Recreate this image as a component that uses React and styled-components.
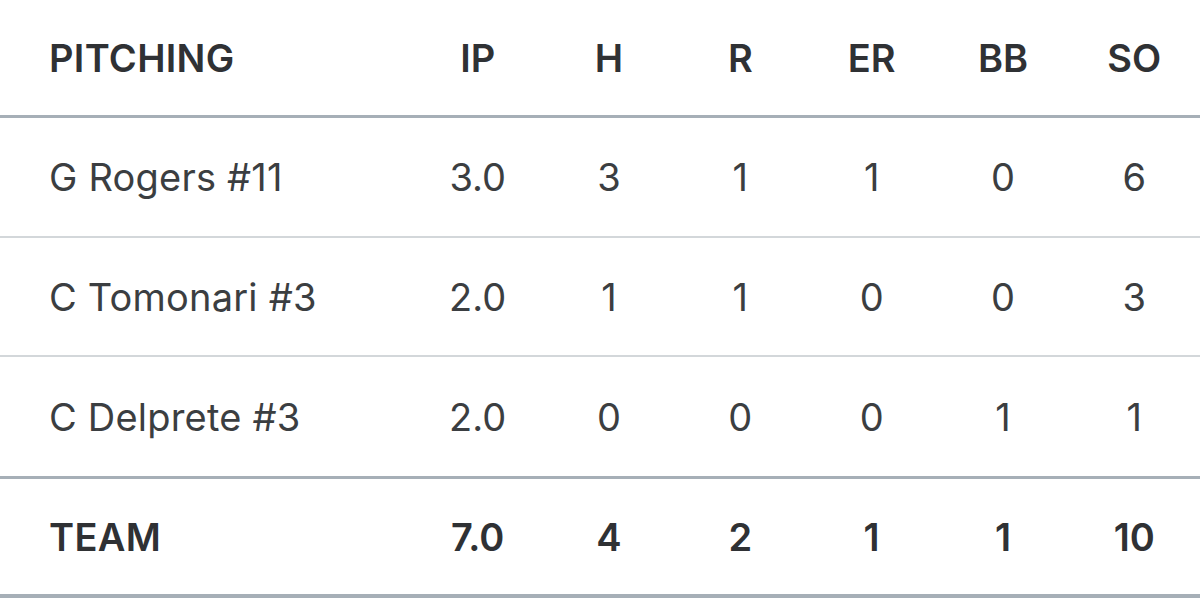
import React from "react";
import styled, { createGlobalStyle } from "styled-components";

const Global = createGlobalStyle`
  html, body { margin: 0; padding: 0; background: #ffffff; }
  body { font-family: Inter, "Noto Sans", "Liberation Sans", sans-serif; }
`;

const Table = styled.div`
  width: 1200px;
  display: flex;
  flex-direction: column;
  background: #fff;
`;

const Row = styled.div`
  display: grid;
  grid-template-columns: 412px repeat(6, 1fr);
  align-items: center;
  height: ${(p) => p.$h}px;
  border-bottom: ${(p) => p.$bw}px solid ${(p) => p.$bc};
  box-sizing: content-box;
`;

const NameCell = styled.div`
  padding-left: 49px;
  font-size: 38px;
  font-weight: ${(p) => (p.$bold ? 600 : 400)};
  color: ${(p) => (p.$bold ? "#2f3134" : "#3b3e41")};
  letter-spacing: ${(p) => (p.$bold ? "0.3px" : "0.2px")};
  white-space: nowrap;
`;

const NumCell = styled.div`
  text-align: center;
  font-size: 38px;
  font-weight: ${(p) => (p.$bold ? 600 : 400)};
  color: ${(p) => (p.$bold ? "#2f3134" : "#3b3e41")};
`;

const cols = ["IP", "H", "R", "ER", "BB", "SO"];
const players = [
  { name: "G Rogers #11", s: ["3.0", "3", "1", "1", "0", "6"], h: 118, bw: 2, bc: "#d3d7da" },
  { name: "C Tomonari #3", s: ["2.0", "1", "1", "0", "0", "3"], h: 117, bw: 2, bc: "#d3d7da" },
  { name: "C Delprete #3", s: ["2.0", "0", "0", "0", "1", "1"], h: 119, bw: 3, bc: "#a6afb7" },
];
const team = ["7.0", "4", "2", "1", "1", "10"];

export default function App() {
  return (
    <>
      <Global />
      <Table>
        <Row $h={115} $bw={3} $bc="#a6afb7">
          <NameCell $bold>PITCHING</NameCell>
          {cols.map((c) => (
            <NumCell key={c} $bold>{c}</NumCell>
          ))}
        </Row>
        {players.map((p) => (
          <Row key={p.name} $h={p.h} $bw={p.bw} $bc={p.bc}>
            <NameCell>{p.name}</NameCell>
            {p.s.map((v, i) => (
              <NumCell key={i}>{v}</NumCell>
            ))}
          </Row>
        ))}
        <Row $h={115} $bw={4} $bc="#a6afb7">
          <NameCell $bold>TEAM</NameCell>
          {team.map((v, i) => (
            <NumCell key={i} $bold>{v}</NumCell>
          ))}
        </Row>
      </Table>
    </>
  );
}
